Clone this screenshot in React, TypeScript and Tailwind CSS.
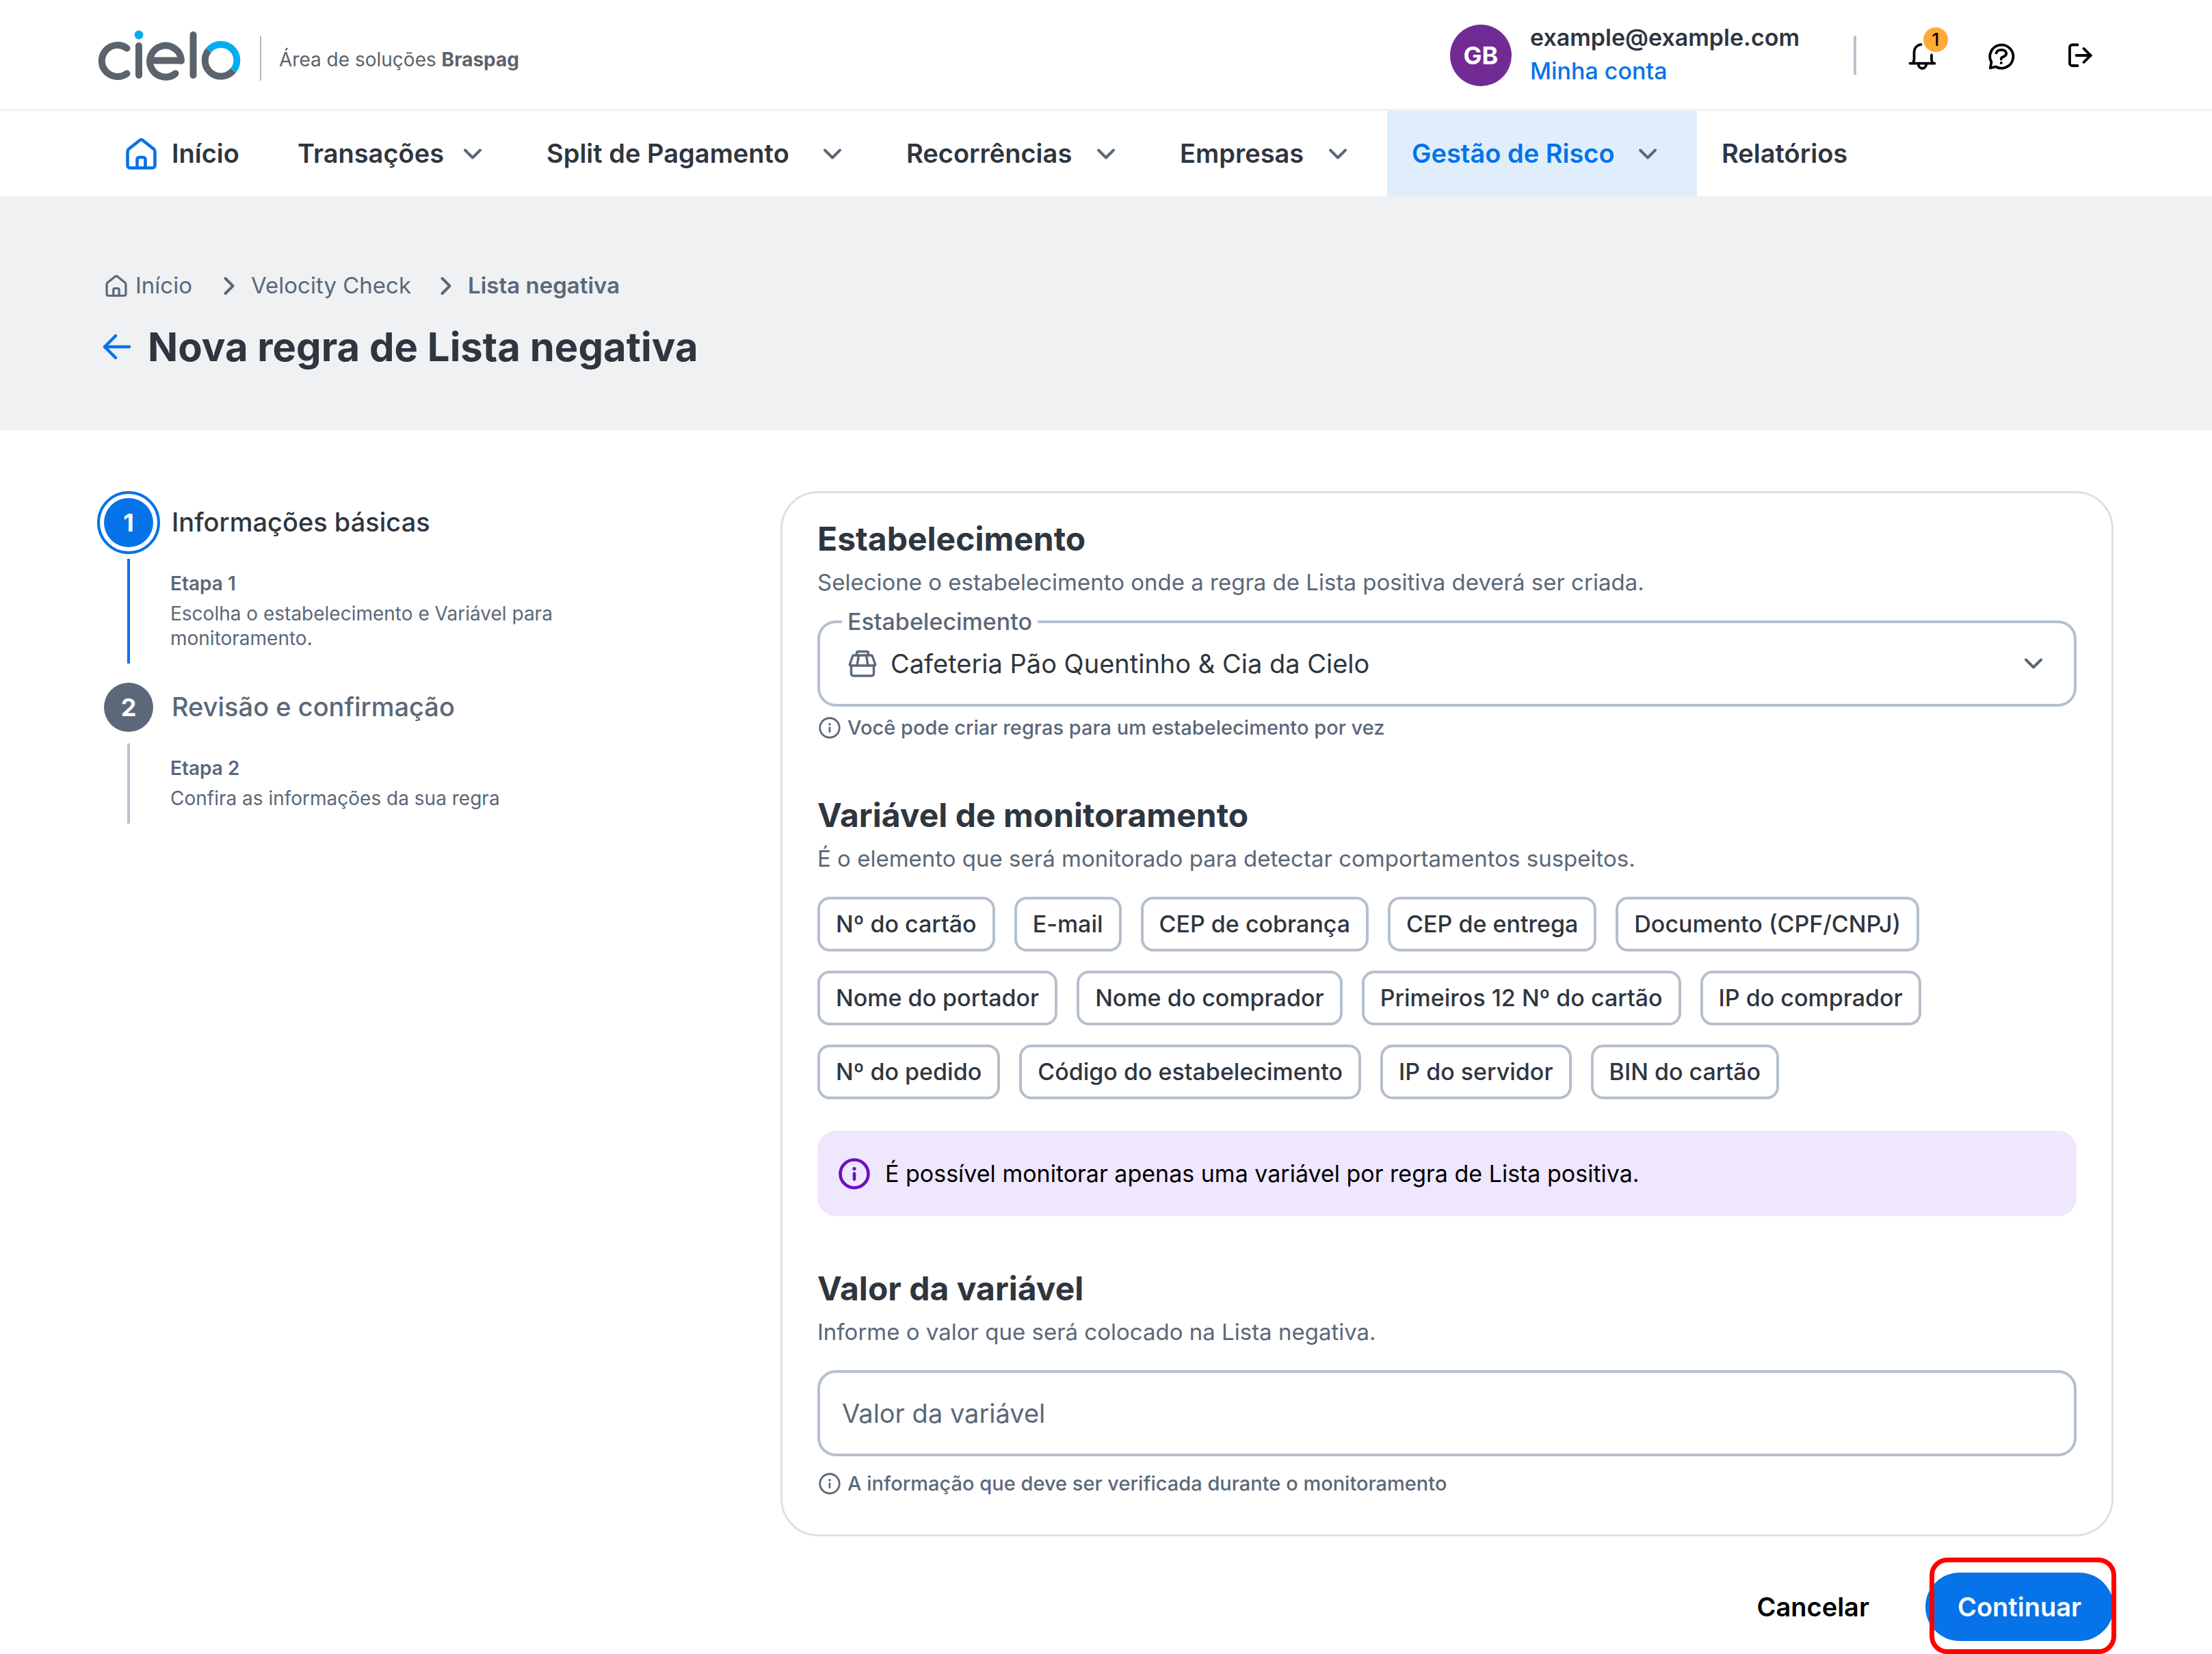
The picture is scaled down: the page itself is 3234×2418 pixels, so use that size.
import { useId, useState } from "react";
import type { ReactNode } from "react";

function Logo() {
  return (
    <svg viewBox="144 44 208 74" className="h-[74px] w-52 shrink-0" fill="none" strokeWidth="10" strokeLinecap="round" role="img" aria-label="cielo">
      <g stroke="#5b636d">
        <path d="M185.500 70.500A23 23 0 1 0 185.500 107.500" />
        <path d="M203 67V110" />
        <path d="M256.500 107.500A23 23 0 1 1 265 88C265 90 264 88.500 262 88.500H220" />
        <path d="M282.500 51V110" />
        <path d="M305 73.500A23 23 0 1 0 341 103" strokeLinecap="butt" />
      </g>
      <path d="M305 73.500A23 23 0 1 1 341 103" stroke="#00aeef" strokeLinecap="butt" />
      <circle cx="203" cy="51" r="6.400" fill="#00aeef" />
    </svg>
  );
}

function HomeIcon({ className, weight }: { className: string; weight: number }) {
  return (
    <svg viewBox="0 0 45 46" className={className} fill="none" stroke="currentColor" strokeWidth={weight} strokeLinejoin="round" strokeLinecap="round" aria-hidden="true">
      <path d="M2.500 19.500V40a3.500 3.500 0 0 0 3.500 3.500H39a3.500 3.500 0 0 0 3.500-3.500V19.500a5 5 0 0 0-1.800-3.800L24.500 3a3.200 3.200 0 0 0-4 0L4.300 15.700a5 5 0 0 0-1.800 3.800Z" />
      <path d="M16.500 43V31a3 3 0 0 1 3-3h6a3 3 0 0 1 3 3V43" />
    </svg>
  );
}

function Chevron({ className }: { className: string }) {
  return (
    <svg viewBox="0 0 28 18" className={className} fill="none" stroke="currentColor" strokeWidth="4" strokeLinejoin="round" strokeLinecap="round" aria-hidden="true">
      <path d="M3 3.500 14 14.500 25 3.500" />
    </svg>
  );
}

function InfoIcon({ className, weight }: { className: string; weight: number }) {
  return (
    <svg viewBox="0 0 46 46" className={className} fill="none" stroke="currentColor" strokeWidth={weight} strokeLinecap="round" aria-hidden="true">
      <circle cx="23" cy="23" r="20.500" />
      <path d="M23 22.500V31" />
      <circle cx="23" cy="15.500" r="2.600" fill="currentColor" stroke="none" />
    </svg>
  );
}

function StoreIcon() {
  return (
    <svg viewBox="0 0 42 40" className="h-10 w-[42px] shrink-0 text-[#5a6878]" fill="none" stroke="currentColor" strokeWidth="3.400" strokeLinejoin="round" strokeLinecap="round" aria-hidden="true">
      <path d="M12.500 8V4.500a2 2 0 0 1 2-2h13a2 2 0 0 1 2 2V8" />
      <path d="M8.500 8h25a2 2 0 0 1 2 1.500L39.500 21a1.500 1.500 0 0 1-1.500 2H4a1.500 1.500 0 0 1-1.500-2L6.500 9.500A2 2 0 0 1 8.500 8Z" />
      <path d="M15.500 8 13 23M26.500 8 29 23" />
      <path d="M4.500 23V35a3 3 0 0 0 3 3h27a3 3 0 0 0 3-3V23" />
    </svg>
  );
}

function ActionIcon({ children }: { children: ReactNode }) {
  return (
    <svg viewBox="0 0 44 44" className="size-11" fill="none" stroke="currentColor" strokeWidth="3.800" strokeLinecap="round" strokeLinejoin="round" aria-hidden="true">
      {children}
    </svg>
  );
}

type Item = { label: string; width: string; active?: boolean };

const navItems: Item[] = [
  { label: "Transações", width: "w-[364px]" },
  { label: "Split de Pagamento", width: "w-[526px]" },
  { label: "Recorrências", width: "w-[400px]" },
  { label: "Empresas", width: "w-[339px]" },
  { label: "Gestão de Risco", width: "w-[453px]", active: true },
];

const variables = [
  "Nº do cartão",
  "E-mail",
  "CEP de cobrança",
  "CEP de entrega",
  "Documento (CPF/CNPJ)",
  "Nome do portador",
  "Nome do comprador",
  "Primeiros 12 Nº do cartão",
  "IP do comprador",
  "Nº do pedido",
  "Código do estabelecimento",
  "IP do servidor",
  "BIN do cartão",
];

function SectionTitle({ title, text }: { title: string; text: string }) {
  return (
    <>
      <h2 className="text-[48px] leading-[56px] font-bold text-[#2e363f]">{title}</h2>
      <p className="mt-[15px] text-[33px] leading-10 text-[#5a6878]">{text}</p>
    </>
  );
}

function Hint({ children, className }: { children: ReactNode; className: string }) {
  return (
    <p className={`flex items-center gap-[10px] pl-[2px] text-[29px] leading-8 font-medium text-[#5a6878] ${className}`}>
      <InfoIcon className="size-8 shrink-0" weight={4} />
      {children}
    </p>
  );
}

function Step({ number, title, text, current }: { number: number; title: string; text: string; current?: boolean }) {
  return (
    <li className="flex gap-[15px] pb-[18px]">
      <div className="flex w-[92px] shrink-0 flex-col items-center">
        <div className={`flex size-[92px] items-center justify-center rounded-full ${current ? "border-4 border-[#0673e8]" : ""}`}>
          <span className={`flex size-[72px] items-center justify-center rounded-full text-[36px] font-bold text-white ${current ? "bg-[#0673e8]" : "bg-[#5c687a]"}`}>{number}</span>
        </div>
        <div className={`mt-[7px] w-1 grow ${current ? "bg-[#0673e8]" : "bg-[#b8c2cf]"}`} />
      </div>
      <div className="pt-[23px] pb-[19px]">
        <h2 className={`pl-[2px] text-[38px] leading-[44px] font-medium ${current ? "text-[#2e363f]" : "text-[#5a6878]"}`}>{title}</h2>
        <p className="mt-[50px] text-[28px] leading-9 font-semibold text-[#5a6878]">Etapa {number}</p>
        <p className="mt-2 w-[600px] text-[28px] leading-9 text-[#5a6878]">{text}</p>
      </div>
    </li>
  );
}

export default function App() {
  const id = useId();
  const [value, setValue] = useState("");
  return (
    <div className="min-h-screen bg-white font-['Inter',sans-serif] text-[#2e363f]">
      <header className="flex h-[162px] items-center justify-between border-b-3 border-[#f1f2f3] pt-[3px] pr-[170px] pl-36">
        <a href="#inicio" className="flex items-center">
          <Logo />
          <span className="mt-2 ml-7 h-[66px] w-[2px] bg-[#b4b9bf]" />
          <span className="ml-[26px] pt-3 text-[28px] leading-9 text-[#5b636d]">
            Área de soluções <b className="font-bold">Braspag</b>
          </span>
        </a>
        <div className="flex items-center">
          <span className="flex size-[90px] items-center justify-center rounded-full bg-[#722b94] text-[36px] font-bold text-white">GB</span>
          <div className="ml-[27px] flex w-[395px] flex-col pb-1 text-[34px] leading-[49px]">
            <span className="font-semibold">example@example.com</span>
            <a href="#conta" className="font-medium text-[#0673e8]">Minha conta</a>
          </div>
          <span className="ml-[78px] h-[58px] w-1 rounded-full bg-[#b8c2d0]" />
          <button type="button" aria-label="Notificações" className="relative ml-[75px] size-11 text-black">
            <ActionIcon>
              <path d="M19.500 6C13.500 7 9.500 11.500 9.500 18V28L8 33.500M35 21.500V29L36.500 33.500M3.500 33.700H39.500" />
              <path d="M15.500 34.500c.5 4 3 6.500 6 6.500s5.500-2.500 6-6.500" />
            </ActionIcon>
            <span className="absolute -top-[19px] left-[23px] flex size-9 items-center justify-center rounded-full bg-[#ffa938] text-[26px] leading-9 font-medium">1</span>
          </button>
          <button type="button" aria-label="Ajuda" className="ml-[72px] size-11 text-black">
            <ActionIcon>
              <path d="M4.800 40.500 6.500 32A17 17 0 1 1 13 38.500Z" />
              <path d="M13.500 18.500C14.500 15.200 17.800 13.800 21.200 13.800C25.800 13.800 28.300 16.200 28.300 19.200C28.300 22.600 25 23.500 22.700 24.500C21.300 25.100 20.800 26 20.800 27.500" />
              <circle cx="20.800" cy="33" r="2" fill="currentColor" stroke="none" />
            </ActionIcon>
          </button>
          <button type="button" aria-label="Sair" className="ml-[71px] size-11 text-black">
            <ActionIcon>
              <path d="M17.500 6.500H9.500a3.500 3.500 0 0 0-3.500 3.500V33.500A3.500 3.500 0 0 0 9.500 37H17.500M15.500 22H37M26.500 12 36.500 22 26.500 32" />
            </ActionIcon>
          </button>
        </div>
      </header>

      <nav className="flex h-[125px] pl-[184px] text-[38px] font-semibold">
        <a href="#inicio" className="flex w-[215px] items-center gap-[22px]">
          <HomeIcon className="h-[46px] w-[45px] text-[#0673e8]" weight={4.600} />
          Início
        </a>
        {navItems.map((item) => (
          <button
            key={item.label}
            type="button"
            className={`flex shrink-0 items-center justify-between pr-[58px] pl-9 ${item.width} ${item.active ? "bg-[#e0eefc] text-[#0673e8]" : ""}`}
          >
            {item.label}
            <Chevron className="h-[18px] w-7 text-[#5a6878]" />
          </button>
        ))}
        <a href="#relatorios" className="flex items-center px-9">Relatórios</a>
      </nav>

      <section className="h-[342px] bg-[#eff1f3] pt-[109px] pl-[150px]">
        <nav aria-label="Trilha" className="flex h-11 items-center text-[33px] text-[#5a6878]">
          <a href="#inicio" className="flex w-[171px] items-center gap-3 pl-1">
            <HomeIcon className="size-8" weight={4.600} />
            Início
          </a>
          <Chevron className="h-[18px] w-7 -rotate-90" />
          <a href="#velocity" className="ml-[18px] w-[271px]">Velocity Check</a>
          <Chevron className="h-[18px] w-7 -rotate-90" />
          <span className="ml-[18px] font-semibold">Lista negativa</span>
        </nav>
        <div className="mt-[35px] flex h-16 items-center">
          <a href="#voltar" aria-label="Voltar" className="w-[66px] text-[#0673e8]">
            <svg viewBox="0 0 42 38" className="h-[38px] w-[42px]" fill="none" stroke="currentColor" strokeWidth="4.500" strokeLinecap="round" strokeLinejoin="round">
              <path d="M39 19H3M19 3 3 19 19 35" />
            </svg>
          </a>
          <h1 className="text-[58px] leading-[64px] font-bold">Nova regra de Lista negativa</h1>
        </div>
      </section>

      <div className="flex pt-[89px] pr-36 pl-[142px]">
        <ol className="w-[999px] shrink-0">
          <Step number={1} current title="Informações básicas" text="Escolha o estabelecimento e Variável para monitoramento." />
          <Step number={2} title="Revisão e confirmação" text="Confira as informações da sua regra" />
        </ol>

        <main className="min-w-0 grow">
          <div className="rounded-[55px] border-3 border-[#dbe1e6] px-[51px] pt-[39px] pb-[58px]">
            <SectionTitle title="Estabelecimento" text="Selecione o estabelecimento onde a regra de Lista positiva deverá ser criada." />
            <div className="relative mt-9 flex h-[126px] items-center rounded-[27px] border-4 border-[#b5c0cd] pr-[45px] pl-[41px]">
              <label htmlFor={`${id}-loja`} className="absolute -top-[22px] left-8 bg-white px-2 text-[34px] leading-10 font-medium text-[#5a6878]">
                Estabelecimento
              </label>
              <StoreIcon />
              <select id={`${id}-loja`} className="ml-5 grow appearance-none bg-transparent text-[38px] leading-[50px]">
                <option>Cafeteria Pão Quentinho &amp; Cia da Cielo</option>
              </select>
              <Chevron className="h-[18px] w-7 text-[#5a6878]" />
            </div>
            <Hint className="mt-[15px]">Você pode criar regras para um estabelecimento por vez</Hint>

            <div className="mt-[84px]">
              <SectionTitle title="Variável de monitoramento" text="É o elemento que será monitorado para detectar comportamentos suspeitos." />
            </div>
            <div className="mt-9 flex flex-wrap gap-7">
              {variables.map((name) => (
                <button key={name} type="button" className="h-20 rounded-[18px] border-4 border-[#b5c0cd] px-[23px] text-[34px] leading-10 font-medium">
                  {name}
                </button>
              ))}
            </div>
            <p className="mt-[46px] flex h-[125px] items-center gap-[22px] rounded-[27px] bg-[#efe7fd] pl-[31px] text-[34px] text-black">
              <InfoIcon className="size-[46px] text-[#6f0fc3]" weight={4.600} />
              É possível monitorar apenas uma variável por regra de Lista positiva.
            </p>

            <div className="mt-[78px]">
              <SectionTitle title="Valor da variável" text="Informe o valor que será colocado na Lista negativa." />
            </div>
            <input
              aria-label="Valor da variável"
              placeholder="Valor da variável"
              value={value}
              onChange={(e) => setValue(e.target.value)}
              className="mt-9 block h-[126px] w-full rounded-[27px] border-4 border-[#b5c0cd] px-8 text-[38px] placeholder:text-[#5a6878]"
            />
            <Hint className="mt-6">A informação que deve ser verificada durante o monitoramento</Hint>
          </div>

          <div className="flex items-center justify-end pt-[53px] pb-[19px] text-[38px] font-semibold">
            <button type="button" className="mr-[82px] text-black">Cancelar</button>
            <div className="relative">
              <button type="button" className="block h-[100px] w-[275px] rounded-full bg-[#0673e8] text-white">Continuar</button>
              <span className="pointer-events-none absolute -top-[22px] -right-1 -bottom-[19px] left-[6px] rounded-[26px] border-7 border-[#ff0000]" />
            </div>
          </div>
        </main>
      </div>
    </div>
  );
}
